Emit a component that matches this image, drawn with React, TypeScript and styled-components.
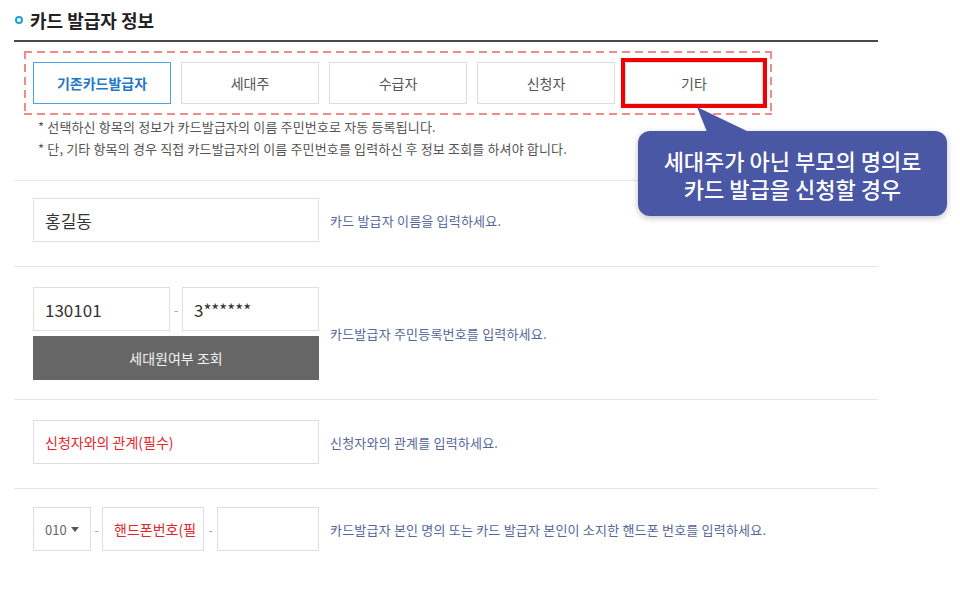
import React from 'react'
import styled, { createGlobalStyle } from 'styled-components'

const GlobalStyle = createGlobalStyle`
  body {
    margin: 0;
    background: #fff;
    font-family: "Noto Sans CJK KR", "Noto Sans", sans-serif;
    color: #333;
  }
`

const Page = styled.div`
  position: relative;
  width: 864px;
  margin-left: 14px;
`

const Header = styled.h2`
  display: flex;
  align-items: center;
  gap: 7px;
  height: 40px;
  margin: 0;
  padding-left: 1px;
  font-size: 18px;
  font-weight: 700;
  color: #222;
  border-bottom: 2px solid #4a4a4a;
`

const Bullet = styled.span`
  width: 8px;
  height: 8px;
  border: 2px solid #1ba1d9;
  border-radius: 50%;
  box-sizing: border-box;
`

const DashedFrame = styled.div`
  display: flex;
  gap: 10px;
  width: 748px;
  box-sizing: border-box;
  margin: 9px 0 0 10px;
  padding: 11px 9px;
  background:
    repeating-linear-gradient(90deg, #ef8b8b 0 8px, transparent 8px 13px) top / 100% 2px no-repeat,
    repeating-linear-gradient(90deg, #ef8b8b 0 8px, transparent 8px 13px) bottom / 100% 2px no-repeat,
    repeating-linear-gradient(180deg, #ef8b8b 0 8px, transparent 8px 13px) left / 2px 100% no-repeat,
    repeating-linear-gradient(180deg, #ef8b8b 0 8px, transparent 8px 13px) right / 2px 100% no-repeat;
`

const Tab = styled.button<{ $active?: boolean; $marked?: boolean }>`
  width: 138px;
  height: 42px;
  box-sizing: border-box;
  background: #fff;
  border: 1px solid ${p => (p.$active ? '#4ba3e3' : '#dcdcdc')};
  font-family: inherit;
  font-size: 14px;
  font-weight: ${p => (p.$active ? 700 : 400)};
  color: ${p => (p.$active ? '#1f78c8' : '#555')};
  outline: ${p => (p.$marked ? '4px solid #f20000' : 'none')};
  padding: 0;
`

const Notes = styled.ul`
  list-style: none;
  margin: 1px 0 20px;
  padding-left: 24px;
  font-size: 13px;
  letter-spacing: 0.15px;
  line-height: 22px;
  color: #555;
`

const Row = styled.div<{ $top?: number; $bottom?: number }>`
  display: flex;
  align-items: center;
  padding: ${p => p.$top ?? 19}px 0 ${p => p.$bottom ?? 23}px 19px;
  border-top: 1px solid #e6e6e6;
  &:last-child {
    border-bottom: 1px solid #e6e6e6;
  }
`

const Field = styled.div`
  display: flex;
  flex-direction: column;
  gap: 5px;
  width: 286px;
`

const Pair = styled.div`
  display: flex;
  align-items: center;
`

const Input = styled.div<{ $width?: number; $required?: boolean }>`
  display: flex;
  align-items: center;
  width: ${p => (p.$width ? `${p.$width}px` : '100%')};
  height: 44px;
  box-sizing: border-box;
  padding-left: 11px;
  border: 1px solid #dedede;
  background: #fff;
  font-size: ${p => (p.$required ? 14 : 17)}px;
  color: ${p => (p.$required ? '#e5252a' : '#333')};
  white-space: nowrap;
  overflow: hidden;
`

const Dash = styled.span<{ $width: number }>`
  width: ${p => p.$width}px;
  text-align: center;
  font-size: 12px;
  color: #999;
`

const Select = styled.div`
  display: flex;
  align-items: center;
  gap: 4px;
  width: 58px;
  height: 44px;
  box-sizing: border-box;
  padding-left: 11px;
  border: 1px solid #dedede;
  font-size: 13px;
  color: #666;
`

const Caret = styled.span`
  width: 0;
  height: 0;
  border-left: 4px solid transparent;
  border-right: 4px solid transparent;
  border-top: 5px solid #555;
`

const GreyButton = styled.button`
  height: 44px;
  border: none;
  background: #666;
  color: #f2f2f2;
  font-family: inherit;
  font-size: 14px;
`

const Hint = styled.span`
  margin-left: 11px;
  font-size: 13px;
  letter-spacing: 0.2px;
  color: #56679b;
`

const Callout = styled.div`
  position: absolute;
  left: 624px;
  top: 131px;
  width: 309px;
  height: 85px;
  box-sizing: border-box;
  display: flex;
  align-items: center;
  justify-content: center;
  text-align: center;
  background: #4a57a4;
  border-radius: 12px;
  box-shadow: 0 2px 6px rgba(0, 0, 0, 0.25);
  color: #fff;
  font-size: 22px;
  font-weight: 500;
  line-height: 28px;
`

const Tail = styled.svg`
  position: absolute;
  left: 56px;
  top: -24px;
`

const tabs = ['기존카드발급자', '세대주', '수급자', '신청자', '기타']

const App = () => {
  return (
    <Page>
      <GlobalStyle />
      <Header>
        <Bullet />
        카드 발급자 정보
      </Header>
      <DashedFrame>
        {tabs.map((name, i) => (
          <Tab key={name} $active={i === 0} $marked={i === 4}>
            {name}
          </Tab>
        ))}
      </DashedFrame>
      <Notes>
        <li>* 선택하신 항목의 정보가 카드발급자의 이름 주민번호로 자동 등록됩니다.</li>
        <li>* 단, 기타 항목의 경우 직접 카드발급자의 이름 주민번호를 입력하신 후 정보 조회를 하셔야 합니다.</li>
      </Notes>

      <Row $top={17} $bottom={24}>
        <Field>
          <Input>홍길동</Input>
        </Field>
        <Hint>카드 발급자 이름을 입력하세요.</Hint>
      </Row>
      <Row $top={20} $bottom={19}>
        <Field>
          <Pair>
            <Input $width={137}>130101</Input>
            <Dash $width={12}>-</Dash>
            <Input $width={137}>3******</Input>
          </Pair>
          <GreyButton>세대원여부 조회</GreyButton>
        </Field>
        <Hint>카드발급자 주민등록번호를 입력하세요.</Hint>
      </Row>
      <Row $top={20} $bottom={24}>
        <Field>
          <Input $required>신청자와의 관계(필수)</Input>
        </Field>
        <Hint>신청자와의 관계를 입력하세요.</Hint>
      </Row>
      <Row $top={18} $bottom={23}>
        <Field>
          <Pair>
            <Select>
              010 <Caret />
            </Select>
            <Dash $width={11}>-</Dash>
            <Input $width={102} $required>핸드폰번호(필</Input>
            <Dash $width={13}>-</Dash>
            <Input $width={102} />
          </Pair>
        </Field>
        <Hint>카드발급자 본인 명의 또는 카드 발급자 본인이 소지한 핸드폰 번호를 입력하세요.</Hint>
      </Row>

      <Callout>
        <Tail width="60" height="26" viewBox="0 0 60 26">
          <polygon points="3,0 13,25 55,25" fill="#4a57a4" />
        </Tail>
        세대주가 아닌 부모의 명의로
        <br />
        카드 발급을 신청할 경우
      </Callout>
    </Page>
  )
}

export default App
